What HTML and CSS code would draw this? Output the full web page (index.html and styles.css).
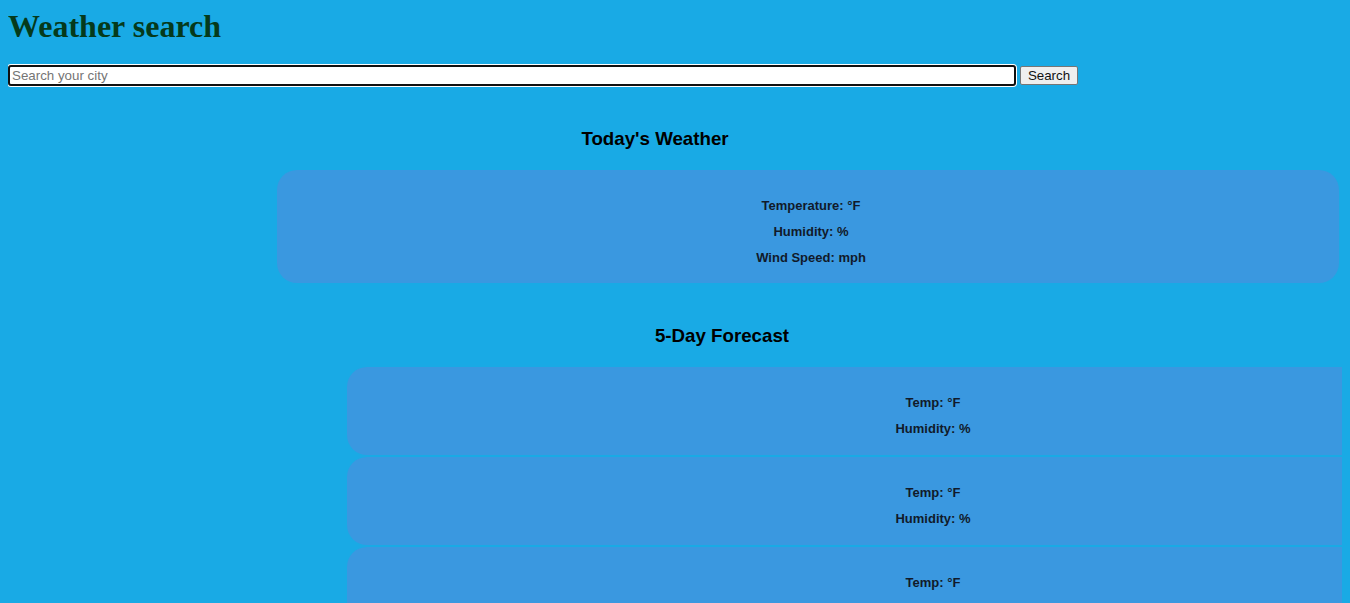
FILE: index.html
```html
<!DOCTYPE html>
<html lang="en">
<head>
<meta charset="utf-8">
<title>Weather search</title>
<link rel="stylesheet" href="styles.css">
</head>
<body>
  <h1 class="page-title">Weather search</h1>
  <form class="search-form">
    <input class="search-input" type="text" placeholder="Search your city" autofocus>
    <button class="search-button" type="button">Search</button>
  </form>

  <h2 class="section-title today-title">Today's Weather</h2>
  <div class="card today-card">
    <p class="card-line">Temperature: °F</p>
    <p class="card-line">Humidity: %</p>
    <p class="card-line">Wind Speed: mph</p>
  </div>

  <h2 class="section-title forecast-title">5-Day Forecast</h2>
  <div class="forecast-list">
    <div class="card forecast-card">
      <p class="card-line">Temp: °F</p>
      <p class="card-line">Humidity: %</p>
    </div>
    <div class="card forecast-card">
      <p class="card-line">Temp: °F</p>
      <p class="card-line">Humidity: %</p>
    </div>
    <div class="card forecast-card">
      <p class="card-line">Temp: °F</p>
      <p class="card-line">Humidity: %</p>
    </div>
    <div class="card forecast-card">
      <p class="card-line">Temp: °F</p>
      <p class="card-line">Humidity: %</p>
    </div>
    <div class="card forecast-card">
      <p class="card-line">Temp: °F</p>
      <p class="card-line">Humidity: %</p>
    </div>
  </div>
</body>
</html>
```

FILE: styles.css
```css
html {
  background: #19aae5;
}

html::-webkit-scrollbar {
  width: 0;
  height: 9px;
  background: #f1f1f1;
}

html::-webkit-scrollbar-thumb {
  background: #c1c1c1;
}

body {
  margin: 8px;
  background: #19aae5;
  font-family: "Liberation Sans", Arial, sans-serif;
}

.page-title {
  margin: 0;
  font-family: "Liberation Serif", "Times New Roman", serif;
  font-size: 32px;
  line-height: 37px;
  font-weight: bold;
  color: #053a1b;
}

.search-form {
  display: flex;
  align-items: center;
  gap: 4px;
  margin-top: 20px;
  width: 1070px;
}

.search-input {
  box-sizing: border-box;
  width: 1008px;
  height: 21px;
  margin: 0;
  padding: 0 2px;
  border: 2px solid #101010;
  border-radius: 3px;
  box-shadow: inset 0 0 0 1px #fff, 0 0 0 1px #fff;
  outline: none;
  background: #fff;
  font-family: "Liberation Sans", Arial, sans-serif;
  font-size: 13.33px;
  color: #000;
  caret-color: #000;
}

.search-input::placeholder {
  color: #757575;
}

.search-button {
  box-sizing: border-box;
  width: 58px;
  height: 19px;
  margin: 0;
  padding: 0 6px;
  border: 1px solid #767676;
  border-radius: 2px;
  background: #efefef;
  font-family: "Liberation Sans", Arial, sans-serif;
  font-size: 13.33px;
  line-height: 15px;
  color: #111;
}

.section-title {
  margin: 0;
  font-size: 18.72px;
  line-height: 22px;
  font-weight: bold;
  color: #000;
  text-align: center;
}

.today-title {
  width: 1294px;
  margin-top: 42px;
  margin-bottom: 20px;
}

.forecast-title {
  width: 1428px;
  margin-top: 42px;
  margin-bottom: 20px;
}

.card {
  box-sizing: border-box;
  background: #3a98e0;
  border-radius: 20px;
  text-align: center;
  color: #111a2a;
}

.today-card {
  width: 1062px;
  margin-left: 269px;
  padding: 23px 0 12px 6px;
}

.forecast-list {
  display: flex;
  flex-direction: column;
  gap: 2px;
  width: 1170px;
  margin-left: 339px;
}

.forecast-card {
  padding: 23px 0 13px 2px;
}

.card-line {
  margin: 0;
  font-size: 13px;
  line-height: 26px;
  font-weight: bold;
}
```
